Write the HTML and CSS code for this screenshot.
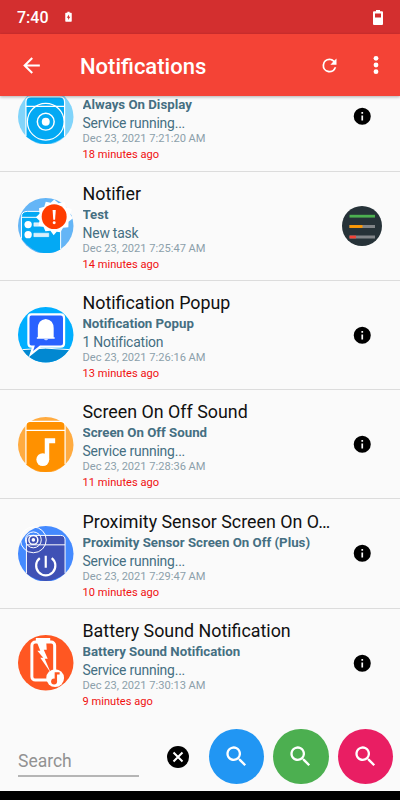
FILE: index.html
```html
<!DOCTYPE html>
<html lang="en">
<head>
    <meta charset="UTF-8">
    <meta name="viewport" content="width=device-width, initial-scale=1.0">
    <title>Notifications</title>
    <link rel="stylesheet" href="styles.css">
</head>
<body>
    <div class="status-bar">
        <span class="clock">7:40</span>
        <svg class="charging" viewBox="0 0 8 12"><path d="M1 1.2h1.7V0h2.6v1.2H7q.7 0 .7.7v8.8q0 .7-.7.7H1q-.7 0-.7-.7V1.900q0-.7.7-.7z" fill="#fff"/><path d="M4.600 3 2 6.800h1.600V9.500L6.100 5.700H4.600z" fill="#d32f2f"/></svg>
        <svg class="battery" viewBox="0 0 10 15"><path d="M1 1.200h2V0h4v1.200h2q1 0 1 1V14q0 1-1 1H1q-1 0-1-1V2.200q0-1 1-1z" fill="#fff"/><path d="M2 3.500h6v4H2z" fill="#d32f2f"/></svg>
    </div>

    <header class="app-bar">
        <button class="icon-btn back-btn" aria-label="Back">
            <svg viewBox="0 0 24 24"><path d="M20 11H7.830l5.590-5.590L12 4l-8 8 8 8 1.410-1.410L7.830 13H20v-2z"/></svg>
        </button>
        <h1>Notifications</h1>
        <button class="icon-btn refresh-btn" aria-label="Refresh">
            <svg viewBox="0 0 24 24"><path d="M17.650 6.350A7.958 7.958 0 0 0 12 4a8 8 0 1 0 7.730 10h-2.080A6 6 0 1 1 12 6c1.660 0 3.140.69 4.220 1.780L13 11h7V4l-2.350 2.350z"/></svg>
        </button>
        <button class="icon-btn more-btn" aria-label="More">
            <svg viewBox="0 0 6 20"><circle cx="3" cy="3.300" r="2.400"/><circle cx="3" cy="10" r="2.400"/><circle cx="3" cy="16.700" r="2.400"/></svg>
        </button>
    </header>

    <main class="list">
        <div class="row">
            <svg class="app-icon" viewBox="0 0 56 56">
                <circle cx="28" cy="28" r="28" fill="#81d4fa"/>
                <path d="M8 48V13q0-5 5-5h29q5 0 5 5v35Q28 63 8 48z" fill="#03a9f4"/>
                <g fill="none" stroke="#fff" stroke-width="1.200">
                    <path d="M8 48V13q0-5 5-5h29q5 0 5 5v35M8 17.500h39"/>
                    <circle cx="28" cy="33" r="18.500"/>
                    <circle cx="28" cy="33" r="8.500" stroke-width="1.500"/>
                </g>
                <circle cx="28" cy="33" r="4" fill="#fff"/>
            </svg>
            <div class="content">
                <div class="title"></div>
                <div class="subject">Always On Display</div>
                <div class="message">Service running...</div>
                <div class="date">Dec 23, 2021 7:21:20 AM</div>
                <div class="ago">18 minutes ago</div>
            </div>
            <button class="info-btn"><svg viewBox="0 0 24 24"><path d="M12 2a10 10 0 1 0 0 20 10 10 0 0 0 0-20zm1 15h-2v-6h2v6zm0-8h-2V7h2v2z"/></svg></button>
        </div>

        <div class="row">
            <svg class="app-icon" viewBox="0 0 56 56">
                <circle cx="28" cy="28" r="28" fill="#64b5f6"/>
                <path d="M3.500 41V19q0-5.500 6-5.500h28q5.500 0 5.500 5.500v33Q21 63 3.500 41z" fill="#03a9f4"/>
                <path d="M3.500 41V19q0-5.500 6-5.500h28q5.500 0 5.500 5.500v33M4 19.500h39" fill="none" stroke="#fff"/>
                <g fill="#fff">
                    <circle cx="10.200" cy="26.800" r="3.700"/>
                    <circle cx="10.200" cy="37" r="3.700"/>
                </g>
                <path d="M16 25h16v3.500H16zM16 35.500h15v3.500H16z" fill="#d7effc" stroke="#fff" stroke-width=".5"/>
                <path d="m36.500 1.500 4.500 3.800 5.800-1.500 1.800 5.500 5.700 2-1.300 5.500 2.500 3.700-4.500 3.500-.2 5.500-5.300.5-2.800 4.500-3.700-.5-3 3.500-3.300-4.500-5 .5-2-4.500-5-1 1-5-3.700-3.700 3.700-3.500-.5-5.500 5.300-1.500 1.500-5 5 1z" fill="#fff"/>
                <circle cx="36.500" cy="18.800" r="12.600" fill="#ff3d00"/>
                <path d="M34.900 12h3.200l-.7 10h-1.800z" fill="#fff"/>
                <circle cx="36.500" cy="25" r="1.500" fill="#fff"/>
            </svg>
            <div class="content">
                <div class="title">Notifier</div>
                <div class="subject">Test</div>
                <div class="message">New task</div>
                <div class="date">Dec 23, 2021 7:25:47 AM</div>
                <div class="ago">14 minutes ago</div>
            </div>
            <svg class="task-icon" viewBox="0 0 40 40">
                <circle cx="20" cy="20" r="20" fill="#263238"/>
                <path d="M7.500 20.500h25.500M7.500 31h25.500" stroke="#808488" stroke-width="2.800"/>
                <path d="M7.500 10.200h25.500" stroke="#4caf50" stroke-width="2.800"/>
                <path d="M7.500 20.500h13" stroke="#ff9800" stroke-width="2.800"/>
                <path d="M7.500 31h6.500" stroke="#f44336" stroke-width="2.800"/>
            </svg>
        </div>

        <div class="row">
            <svg class="app-icon" viewBox="0 0 56 56">
                <circle cx="28" cy="28" r="28" fill="#00aeff"/>
                <path d="M4.500 43Q28 40 51.500 43A28 28 0 0 1 4.500 43z" fill="#0288d1"/>
                <path d="M4.500 43Q28 40 51.500 43" fill="none" stroke="#fff"/>
                <path d="M13.500 7.500h29.500q3.500 0 3.500 3.500v25.500q0 3.500-3.500 3.500H22.500L13 47.500l2.500-7.500h-2q-3 0-3-3.500V11q0-3.500 3-3.500z" fill="#2962ff" stroke="#fff" stroke-width="2.200"/>
                <path d="M28 12q8 1 8 9.500v9h1v1.500H19v-1.500h1v-9Q20 13 28 12zM26 32.500h4.500q-2 2-4.500 0z" fill="#fff"/>
            </svg>
            <div class="content">
                <div class="title">Notification Popup</div>
                <div class="subject">Notification Popup</div>
                <div class="message">1 Notification</div>
                <div class="date">Dec 23, 2021 7:26:16 AM</div>
                <div class="ago">13 minutes ago</div>
            </div>
            <button class="info-btn"><svg viewBox="0 0 24 24"><path d="M12 2a10 10 0 1 0 0 20 10 10 0 0 0 0-20zm1 15h-2v-6h2v6zm0-8h-2V7h2v2z"/></svg></button>
        </div>

        <div class="row">
            <svg class="app-icon" viewBox="0 0 56 56">
                <circle cx="28" cy="28" r="28" fill="#ffab40"/>
                <path d="M8 48V9q0-4 4-4h31q4.500 0 4.500 4v39Q28 63 8 48z" fill="#ff9100"/>
                <path d="M8 48V9q0-4.500 4-4.500h31q4.500 0 4.500 4.500v39M8 13.500h39.500" fill="none" stroke="#fff" stroke-width="1.200"/>
                <path d="M27 21.500h10.500v5h-6V43h-4.500z" fill="#fff"/>
                <circle cx="25" cy="43" r="6.500" fill="#fff"/>
            </svg>
            <div class="content">
                <div class="title">Screen On Off Sound</div>
                <div class="subject">Screen On Off Sound</div>
                <div class="message">Service running...</div>
                <div class="date">Dec 23, 2021 7:28:36 AM</div>
                <div class="ago">11 minutes ago</div>
            </div>
            <button class="info-btn"><svg viewBox="0 0 24 24"><path d="M12 2a10 10 0 1 0 0 20 10 10 0 0 0 0-20zm1 15h-2v-6h2v6zm0-8h-2V7h2v2z"/></svg></button>
        </div>

        <div class="row">
            <svg class="app-icon" viewBox="0 0 56 56">
                <circle cx="28" cy="28" r="28" fill="#448aff"/>
                <path d="M8.500 48V14q0-4.500 4.500-4.500h30q4.500 0 4.500 4.500v34Q28 63 8.500 48z" fill="#3f51b5"/>
                <g fill="none" stroke="#fff">
                    <path d="M8.500 48V14q0-4.500 4.500-4.500h30q4.500 0 4.500 4.500v34M8.500 19h39"/>
                    <circle cx="15.500" cy="14" r="13"/>
                    <circle cx="15.500" cy="14" r="8"/>
                    <circle cx="15.500" cy="14" r="4.500" stroke-width="1.500"/>
                    <path d="M28 30v12M22 32.500a9.700 9.700 0 1 0 12 0" stroke-width="2.200"/>
                </g>
                <circle cx="15.500" cy="14" r="1.800" fill="#fff"/>
            </svg>
            <div class="content">
                <div class="title">Proximity Sensor Screen On O…</div>
                <div class="subject">Proximity Sensor Screen On Off (Plus)</div>
                <div class="message">Service running...</div>
                <div class="date">Dec 23, 2021 7:29:47 AM</div>
                <div class="ago">10 minutes ago</div>
            </div>
            <button class="info-btn"><svg viewBox="0 0 24 24"><path d="M12 2a10 10 0 1 0 0 20 10 10 0 0 0 0-20zm1 15h-2v-6h2v6zm0-8h-2V7h2v2z"/></svg></button>
        </div>

        <div class="row">
            <svg class="app-icon" viewBox="0 0 56 56">
                <circle cx="28" cy="28" r="28" fill="#ff5722"/>
                <rect x="14" y="7" width="23" height="38.500" rx="3.500" fill="none" stroke="#fff" stroke-width="3"/>
                <path d="M18 3h14.500v4H18zM19 7h9.500l.5 8h-3l4 9h-3l6 14-10.500-15h3L19.500 16h3z" fill="#fff"/>
                <circle cx="37.500" cy="43.500" r="9" fill="#fff"/>
                <path d="M37 37.500h5v2.300h-2.600v7.200H37z" fill="#ff5722"/>
                <circle cx="36.400" cy="47" r="3" fill="#ff5722"/>
            </svg>
            <div class="content">
                <div class="title">Battery Sound Notification</div>
                <div class="subject">Battery Sound Notification</div>
                <div class="message">Service running...</div>
                <div class="date">Dec 23, 2021 7:30:13 AM</div>
                <div class="ago">9 minutes ago</div>
            </div>
            <button class="info-btn"><svg viewBox="0 0 24 24"><path d="M12 2a10 10 0 1 0 0 20 10 10 0 0 0 0-20zm1 15h-2v-6h2v6zm0-8h-2V7h2v2z"/></svg></button>
        </div>
    </main>

    <div class="search-bar">
        <input type="text" class="search-input" placeholder="Search">
        <button class="clear-btn" aria-label="Clear">
            <svg viewBox="0 0 22 22"><circle cx="11" cy="11" r="11"/><path d="m6.500 6.500 9 9m0-9-9 9" stroke="#fff" stroke-width="2"/></svg>
        </button>
        <div class="search-buttons">
            <button class="search-btn blue"><svg viewBox="0 0 24 24"><path d="M15.500 14h-.79l-.28-.27A6.500 6.500 0 1 0 13.730 14.430l.27.28v.79l5 4.990L20.490 19l-4.990-5zm-6 0a4.500 4.500 0 1 1 0-9 4.500 4.500 0 0 1 0 9z"/></svg></button>
            <button class="search-btn green"><svg viewBox="0 0 24 24"><path d="M15.500 14h-.79l-.28-.27A6.500 6.500 0 1 0 13.730 14.430l.27.28v.79l5 4.990L20.490 19l-4.990-5zm-6 0a4.500 4.500 0 1 1 0-9 4.500 4.500 0 0 1 0 9z"/></svg></button>
            <button class="search-btn pink"><svg viewBox="0 0 24 24"><path d="M15.500 14h-.79l-.28-.27A6.500 6.500 0 1 0 13.730 14.430l.27.28v.79l5 4.990L20.490 19l-4.990-5zm-6 0a4.500 4.500 0 1 1 0-9 4.500 4.500 0 0 1 0 9z"/></svg></button>
        </div>
    </div>
    <div class="nav-bar"></div>
</body>
</html>
```
FILE: styles.css
```css
* {
    box-sizing: border-box;
}

body {
    font-family: Roboto, sans-serif;
    background-color: #fafafa;
    margin: 0;
    height: 100vh;
    display: flex;
    flex-direction: column;
    overflow: hidden;
}

svg {
    display: block;
    flex: none;
}

button {
    border: none;
    background: none;
    padding: 0;
    flex: none;
}

.status-bar {
    height: 34px;
    flex: none;
    background-color: #d32f2f;
    color: white;
    display: flex;
    align-items: center;
    padding: 0 17px;
}

.clock {
    font-size: 16px;
    font-weight: 500;
    width: 48px;
}

.charging {
    width: 7px;
    height: 12px;
}

.battery {
    width: 10px;
    height: 15px;
    margin-left: auto;
}

.app-bar {
    height: 62px;
    flex: none;
    background-color: #f44336;
    color: white;
    display: flex;
    align-items: center;
    padding: 0 21px 0 19px;
    box-shadow: 0 1px 3px rgba(0, 0, 0, 0.3);
    z-index: 1;
}

.app-bar h1 {
    font-size: 22px;
    font-weight: 500;
    margin: 2px 0 0 36px;
    flex: 1;
}

.icon-btn svg {
    fill: white;
}

.back-btn svg {
    width: 25px;
    height: 25px;
}

.refresh-btn svg {
    width: 21px;
    height: 21px;
}

.more-btn {
    margin-left: 33px;
}

.more-btn svg {
    width: 6px;
    height: 20px;
}

.list {
    height: 622px;
    flex: none;
    display: flex;
    flex-direction: column;
    justify-content: flex-end;
    overflow: hidden;
}

.row {
    height: 109.300px;
    flex: none;
    display: flex;
    align-items: center;
    padding: 0 18px;
    border-bottom: 1px solid #dcdcdc;
}

.row:last-child {
    border-bottom-color: transparent;
}

.app-icon {
    width: 55.500px;
    height: 55.500px;
}

.content {
    width: 252px;
    margin-left: 9px;
    padding-top: 3px;
    color: #456f82;
}

.title,
.subject {
    white-space: nowrap;
    overflow: hidden;
    text-overflow: ellipsis;
}

.title {
    height: 23px;
    font-size: 17.850px;
    line-height: 23px;
    color: #111;
}

.subject {
    font-size: 13.250px;
    line-height: 19px;
    font-weight: 700;
}

.message {
    font-size: 13.900px;
    line-height: 18px;
    letter-spacing: -0.2px;
}

.date {
    font-size: 11.100px;
    line-height: 14px;
    color: #8ca0aa;
}

.ago {
    font-size: 11.100px;
    line-height: 17px;
    color: #f01010;
}

.info-btn {
    margin-left: 17px;
}

.info-btn svg {
    width: 20.500px;
    height: 20.500px;
}

.task-icon {
    width: 40px;
    height: 40px;
    margin-left: 7px;
}

.search-bar {
    flex: 1;
    display: flex;
    align-items: center;
    padding: 4px 7px 0 18px;
}

.search-input {
    width: 121px;
    height: 33px;
    margin-top: 7px;
    padding: 4px 0 0;
    border: none;
    border-bottom: 2px solid #b5b5b5;
    background: none;
    font-family: Roboto, sans-serif;
    font-size: 17.500px;
    outline: none;
}

.search-input::placeholder {
    color: #929292;
}

.clear-btn {
    margin-left: 28px;
}

.clear-btn svg {
    width: 22px;
    height: 22px;
}

.search-buttons {
    display: flex;
    gap: 9px;
    margin-left: auto;
}

.search-btn {
    width: 55.500px;
    height: 55.500px;
    border-radius: 50%;
    display: flex;
    align-items: center;
    justify-content: center;
}

.search-btn svg {
    width: 27px;
    height: 27px;
    fill: white;
}

.blue {
    background-color: #2196f3;
}

.green {
    background-color: #4caf50;
}

.pink {
    background-color: #e91e63;
}

.nav-bar {
    height: 9px;
    flex: none;
    background-color: black;
}
```
